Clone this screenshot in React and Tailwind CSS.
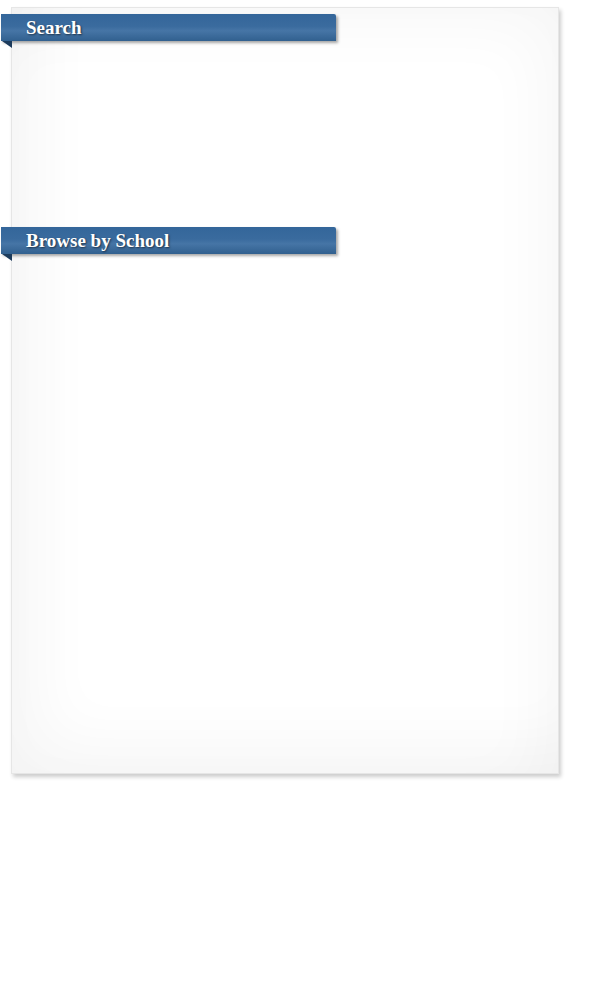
const Ribbon = ({ children }) => (
  <div className="relative -ml-[11px] w-[335px]">
    <div className="h-[27px] pl-[25px] flex items-center rounded-tr-[2px] bg-[linear-gradient(to_bottom,#34669a_0%,#3a6b9e_45%,#4675a6_62%,#31608f_100%)] shadow-[2px_2px_3px_rgba(0,0,0,0.35)]">
      <span
        className="text-[19px] font-bold text-white leading-none [text-shadow:1px_1px_2px_rgba(0,0,0,0.55)]"
        style={{ fontFamily: '"Liberation Serif", "Times New Roman", serif' }}
      >
        {children}
      </span>
    </div>
    {/* folded corner */}
    <div className="absolute left-[1px] top-[27px] w-0 h-0 border-t-[7px] border-t-[#1c3b5c] border-l-[10px] border-l-transparent" />
  </div>
);

export default function App() {
  return (
    <div className="w-[612px] h-[1000px] bg-white">
      <div className="ml-[11px] pt-[7px]">
        <div className="w-[548px] h-[767px] bg-white border border-[#e6e6e6] shadow-[2px_3px_4px_rgba(0,0,0,0.2),inset_30px_-30px_60px_rgba(0,0,0,0.035),inset_-20px_20px_60px_rgba(0,0,0,0.03)] pt-[6px]">
          <Ribbon>Search</Ribbon>
          <div className="h-[186px]" />
          <Ribbon>Browse by School</Ribbon>
        </div>
      </div>
    </div>
  );
}
